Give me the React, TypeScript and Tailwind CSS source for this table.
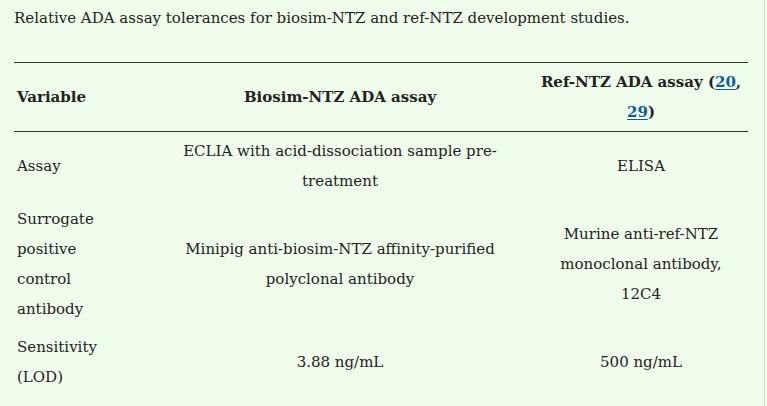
import React from 'react';

const Ref: React.FC<{ n: string }> = ({ n }) => (
  <a className="text-[#0a5e9c] underline underline-offset-2">{n}</a>
);

const rows = [
  { v: 'Assay', b: 'ECLIA with acid-dissociation sample pre-treatment', r: 'ELISA' },
  {
    v: 'Surrogate positive control antibody',
    b: 'Minipig anti-biosim-NTZ affinity-purified polyclonal antibody',
    r: 'Murine anti-ref-NTZ monoclonal antibody, 12C4',
  },
  { v: 'Sensitivity (LOD)', b: '3.88 ng/mL', r: '500 ng/mL' },
];

export default function App() {
  return (
    <div className="w-[767px] h-[406px] bg-[#f1fdec] overflow-hidden">
      <div className="w-[765px] h-full border-r border-[#cde6b4] pl-[14px] pt-[3px] text-[#222] font-['DejaVu_Serif',serif] text-[15px] leading-[30px]">
        <p className="whitespace-nowrap">Relative ADA assay tolerances for biosim-NTZ and ref-NTZ development studies.</p>
        <table className="mt-[29px] w-[734px] table-fixed border-t border-[#333]">
          <colgroup>
            <col className="w-[118px]" />
            <col className="w-[406px]" />
            <col className="w-[210px]" />
          </colgroup>
          <thead>
            <tr className="border-b border-[#333]">
              <th className="px-[3px] py-[4px] text-left align-middle font-bold">Variable</th>
              <th className="pl-[40px] pr-[30px] py-[4px] text-center align-middle font-bold">Biosim-NTZ ADA assay</th>
              <th className="pl-0 pr-[4px] py-[4px] text-center align-middle font-bold">
                Ref-NTZ ADA assay (<Ref n="20" />, <Ref n="29" />)
              </th>
            </tr>
          </thead>
          <tbody>
            {rows.map((row) => (
              <tr key={row.v}>
                <td className="px-[3px] py-[4px] text-left align-middle">{row.v}</td>
                <td className="pl-[40px] pr-[30px] py-[4px] text-center align-middle">{row.b}</td>
                <td className="pl-0 pr-[4px] py-[4px] text-center align-middle">
                  <div className="mx-auto max-w-[190px]">{row.r}</div>
                </td>
              </tr>
            ))}
          </tbody>
        </table>
      </div>
    </div>
  );
}
